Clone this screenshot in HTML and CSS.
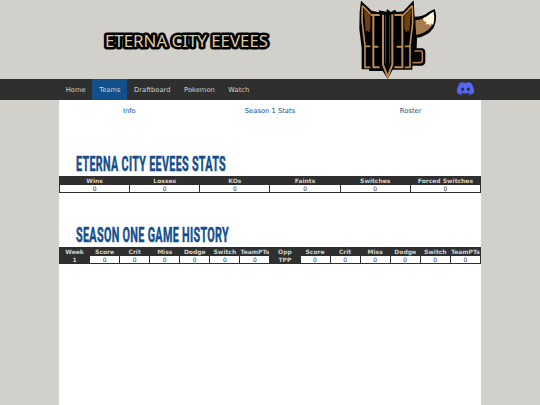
FILE: index.html
```html
<!DOCTYPE html>
<html lang="en">
  <head>
    <meta charset="utf-8">
    <title>Eterna City Eevees</title>
    <link rel="stylesheet" href="styles.css">
  </head>
  <body>
    <header class="banner">
      <svg class="team-name" viewBox="0 0 180 30">
        <text x="10" y="20.7" textLength="163" lengthAdjust="spacingAndGlyphs">ETERNA CITY EEVEES</text>
      </svg>
      <svg class="team-logo" viewBox="0 0 360 237">
        <!-- tail -->
        <path d="M222 50 Q252 50 267 35 L284 27 Q294 56 281 83 Q264 108 231 113 L230 145 H247 Q256 147 256 157 V185 Q255 196 243 197 H210 V60Z" fill="#000"/>
        <path d="M226 61 Q252 60 268 43 L280 35 Q287 58 275 79 Q257 101 226 106Z" fill="#a97d4b"/>
        <path d="M249 55 Q262 50 269 43 L280 35 Q286 55 279 75 L274 70 L270 77 L265 71 L257 74 L259 65 L252 64Z" fill="#fff6df"/>
        <path d="M223 153 H243 Q247 154 247 159 V183 Q246 188 240 188 H217" fill="none" stroke="#a97d4b" stroke-width="5"/>
        <!-- head and ears -->
        <path d="M63 2 L95 32 L118 37 L116 31 L139 35 L141 27 L153 36 L164 29 L171 36 L190 34 L221 1 L224 53 L229 107 L217 145 V209 H158 L143 237 L128 213 H87 V208 H65 V145 L58 88 L59 35Z" fill="#000"/>
        <path d="M72 28 L91 47 V84 L87 98 L82 91 L77 96Z M213 27 L193 47 V84 L199 98 L204 91 L208 96Z" fill="#704109"/>
        <path d="M67 17 L66 62 L75 137 V202 H91 M67 17 L92 43 M217 17 L192 43 M217 17 L218 69 L210 137 V202 H194 M75 139 H91 M194 139 H210" fill="none" stroke="#ba8a57" stroke-width="5"/>
        <!-- lettering strokes -->
        <path d="M92 45 H119 M100 46 V202 H119 M100 140 H115 M163 45 H192 M187 46 V202 H163 M187 140 H170" fill="none" stroke="#ba8a57" stroke-width="6"/>
        <path d="M129 44 V194 L143 230 L157 194 V43" fill="none" stroke="#ba8a57" stroke-width="6"/>
        <path d="M137 45 V190 M149 45 V190" fill="none" stroke="#80613f" stroke-width="2"/>
      </svg>
    </header>

    <nav class="navbar">
      <a href="#">Home</a>
      <a class="active" href="#">Teams</a>
      <a href="#">Draftboard</a>
      <a href="#">Pokemon</a>
      <a href="#">Watch</a>
      <a class="discord" href="#" aria-label="Discord">
        <svg viewBox="0 0 127 96">
          <path fill="#5865f2" d="M107.7 8.1A105 105 0 0 0 81.5 0a72 72 0 0 0-3.4 6.8 97.700 97.700 0 0 0-29.100 0A72 72 0 0 0 45.600 0a106 106 0 0 0-26.200 8.100C2.800 32.700-1.700 56.600.5 80.200a105.700 105.700 0 0 0 32.200 16.200 78 78 0 0 0 6.900-11.100 68 68 0 0 1-10.900-5.200l2.700-2.100a75.600 75.600 0 0 0 64.300 0l2.700 2.100a69 69 0 0 1-10.900 5.200 77 77 0 0 0 6.900 11.100 105 105 0 0 0 32.200-16.200c2.600-27.400-4.500-51.100-18.900-72.100ZM42.500 65.700c-6.300 0-11.500-5.700-11.500-12.700s5-12.700 11.400-12.700S54 46 53.900 53s-5 12.700-11.400 12.700Zm42.200 0c-6.300 0-11.400-5.700-11.400-12.700s5-12.700 11.400-12.700S96.300 46 96.200 53s-5 12.700-11.500 12.700Z"/>
        </svg>
      </a>
    </nav>

    <main class="content">
      <div class="team-links">
        <a href="#">Info</a>
        <a href="#">Season 1 Stats</a>
        <a href="#">Roster</a>
      </div>

      <h2>
        <svg viewBox="0 0 170 24">
          <text x="0" y="18.500" textLength="150" lengthAdjust="spacingAndGlyphs">ETERNA CITY EEVEES STATS</text>
        </svg>
      </h2>
      <table>
        <tr>
          <th>Wins</th>
          <th>Losses</th>
          <th>KOs</th>
          <th>Faints</th>
          <th>Switches</th>
          <th>Forced Switches</th>
        </tr>
        <tr>
          <td>0</td>
          <td>0</td>
          <td>0</td>
          <td>0</td>
          <td>0</td>
          <td>0</td>
        </tr>
      </table>

      <h2 class="history">
        <svg viewBox="0 0 170 24">
          <text x="0" y="18.500" textLength="153" lengthAdjust="spacingAndGlyphs">SEASON ONE GAME HISTORY</text>
        </svg>
      </h2>
      <table>
        <tr>
          <th>Week</th>
          <th>Score</th>
          <th>Crit</th>
          <th>Miss</th>
          <th>Dodge</th>
          <th>Switch</th>
          <th>TeamPTs</th>
          <th>Opp</th>
          <th>Score</th>
          <th>Crit</th>
          <th>Miss</th>
          <th>Dodge</th>
          <th>Switch</th>
          <th>TeamPTs</th>
        </tr>
        <tr>
          <th>1</th>
          <td>0</td>
          <td>0</td>
          <td>0</td>
          <td>0</td>
          <td>0</td>
          <td>0</td>
          <th>TPP</th>
          <td>0</td>
          <td>0</td>
          <td>0</td>
          <td>0</td>
          <td>0</td>
          <td>0</td>
        </tr>
      </table>
    </main>
  </body>
</html>
```

FILE: styles.css
```css
* {
  box-sizing: border-box;
}
body {
  margin: 0;
  height: 405px;
  overflow: hidden;
  display: flex;
  flex-direction: column;
  background: #d1d0cb;
  font-family: "DejaVu Sans", Verdana, sans-serif;
  font-size: 6.750px;
}
a {
  text-decoration: none;
}
svg {
  display: block;
  overflow: visible;
}
.banner {
  display: flex;
  align-items: flex-start;
  height: 78.500px;
  padding-left: 95px;
}
.team-name {
  width: 180px;
  height: 30px;
  margin-top: 26px;
}
.team-name text {
  font-family: "Noto Sans", sans-serif;
  font-size: 15.500px;
  fill: #d8cba5;
  stroke: #000;
  stroke-width: 5px;
  stroke-linejoin: round;
  paint-order: stroke;
}
.team-logo {
  width: 120px;
  height: 79px;
  margin-left: 65px;
}
.navbar {
  display: flex;
  flex: none;
  height: 21.500px;
  padding: 0 59px;
  background: #2f2f2f;
}
.navbar a {
  padding: 0 6.750px;
  line-height: 22px;
  color: #d1d0cb;
}
.navbar .active {
  background: #134f8a;
}
.navbar .discord {
  margin-left: auto;
  padding: 3px 7px 0;
}
.discord svg {
  width: 17px;
  height: 13px;
}
.content {
  flex: 1;
  width: 422px;
  margin: 0 auto;
  background: #fff;
}
.team-links {
  display: grid;
  grid-template-columns: repeat(3, 1fr);
  height: 51.500px;
  line-height: 23px;
  text-align: center;
}
.team-links a {
  color: #134f8a;
}
h2 {
  height: 24px;
  margin: 0;
  padding-left: 17px;
}
h2 svg {
  width: 170px;
  height: 24px;
}
h2 text {
  font-family: Roboto, sans-serif;
  font-size: 20px;
  font-weight: 700;
  letter-spacing: 0.600px;
  fill: #134f8a;
  stroke: #134f8a;
  stroke-width: 0.500px;
}
.history {
  margin-top: 30px;
}
table {
  width: 100%;
  height: 17px;
  table-layout: fixed;
  border-collapse: collapse;
  font-size: 6px;
  line-height: 7px;
  text-align: center;
}
th, td {
  height: 8px;
  padding: 0;
  border: 1px solid #2f2f2f;
  white-space: nowrap;
}
th {
  background: #2f2f2f;
  color: #d1d0cb;
}
td {
  color: #2f2f2f;
}
```
